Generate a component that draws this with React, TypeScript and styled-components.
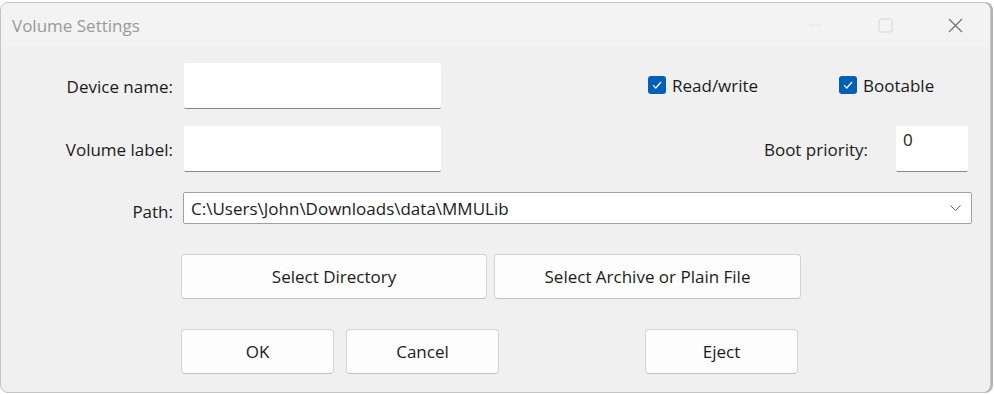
import React from 'react';
import styled, { createGlobalStyle } from 'styled-components';

const GlobalStyle = createGlobalStyle`
    html, body {
        margin: 0;
        padding: 0;
        background: #ffffff;
    }
    body {
        font-family: 'Open Sans', 'Noto Sans', 'Liberation Sans', sans-serif;
        font-size: 17px;
        color: #1b1b1b;
    }
`;

const Screen = styled.div`
    width: 994px;
    height: 394px;
    padding-top: 2px;
    box-sizing: border-box;
    overflow: hidden;
`;

const Window = styled.div`
    width: 991px;
    height: 391px;
    box-sizing: border-box;
    border: 1px solid #c4c4c4;
    border-radius: 8px;
    background: #f0f0f0;
    box-shadow: 2px 0 0 #b4b4b4;
    display: flex;
    flex-direction: column;
    overflow: hidden;
`;

const TitleBar = styled.div`
    height: 44px;
    flex: none;
    display: flex;
    align-items: center;
    padding-left: 11px;
    background: #f3f3f3;
`;

const Title = styled.div`
    flex: 1;
    color: #9a9a9a;
    font-size: 17px;
`;

const CaptionButton = styled.div`
    width: 70px;
    height: 44px;
    display: flex;
    align-items: center;
    justify-content: center;
`;

const Body = styled.div`
    flex: 1;
    display: flex;
    flex-direction: column;
    padding-top: 16px;
`;

const Row = styled.div<{ $gap: number }>`
    display: flex;
    align-items: center;
    margin-bottom: ${(p) => p.$gap}px;
`;

const Label = styled.label<{ $drop?: number }>`
    width: 172px;
    flex: none;
    text-align: right;
    white-space: nowrap;
    padding-top: ${(p) => p.$drop ?? 0}px;
`;

const TextBox = styled.div<{ $width: number; $offset?: number }>`
    width: ${(p) => p.$width}px;
    height: 46px;
    margin-left: ${(p) => p.$offset ?? 0}px;
    flex: none;
    box-sizing: border-box;
    background: #ffffff;
    border-bottom: 1px solid #868686;
    border-radius: 2px;
    padding: 2px 7px;
    line-height: 24px;
`;

const CheckGroup = styled.div`
    display: flex;
    margin-left: 207px;
    margin-top: -2px;
`;

const CheckItem = styled.label<{ $width: number }>`
    width: ${(p) => p.$width}px;
    display: flex;
    align-items: center;
    gap: 6px;
`;

const Box = styled.span`
    width: 18px;
    height: 18px;
    flex: none;
    border-radius: 3px;
    background: #005fb8;
    display: flex;
    align-items: center;
    justify-content: center;
`;

const PriorityGroup = styled.div`
    margin-left: auto;
    margin-right: 22px;
    display: flex;
    align-items: center;
    gap: 28px;
`;

const Combo = styled.div`
    flex: 1;
    margin-left: 10px;
    margin-right: 18px;
    height: 32px;
    box-sizing: border-box;
    border: 1px solid #a0a0a0;
    border-radius: 2px;
    background: #ffffff;
    display: flex;
    align-items: center;
    padding: 0 10px 0 7px;
`;

const ComboText = styled.span`
    flex: 1;
`;

const ButtonRow = styled.div<{ $gap: number }>`
    display: flex;
    padding-left: 180px;
    gap: 8px;
    margin-bottom: ${(p) => p.$gap}px;
`;

const Button = styled.button<{ $width: number; $push?: number }>`
    width: ${(p) => p.$width}px;
    height: 45px;
    margin-left: ${(p) => p.$push ?? 0}px;
    box-sizing: border-box;
    border: 1px solid #d3d3d3;
    border-bottom-color: #c2c2c2;
    border-radius: 4px;
    background: #fdfdfd;
    font: inherit;
    color: #1b1b1b;
    padding: 0;
`;

const Check = () => (
    <svg width="10" height="8" viewBox="0 0 10 8">
        <path d="M1 4.2 L3.8 7 L9 1" fill="none" stroke="#ffffff" strokeWidth="1.2" />
    </svg>
);

export default function App() {
    return (
        <Screen>
            <GlobalStyle />
            <Window>
                <TitleBar>
                    <Title>Volume Settings</Title>
                    <CaptionButton>
                        <svg width="12" height="2" viewBox="0 0 12 2">
                            <path d="M0 1 H12" stroke="#e4e4e4" />
                        </svg>
                    </CaptionButton>
                    <CaptionButton>
                        <svg width="15" height="15" viewBox="0 0 15 15">
                            <rect x="1" y="1" width="13" height="13" rx="2" fill="none" stroke="#d6d6d6" />
                        </svg>
                    </CaptionButton>
                    <CaptionButton>
                        <svg width="15" height="15" viewBox="0 0 15 15">
                            <path d="M1 1 L14 14 M14 1 L1 14" stroke="#707070" strokeWidth="1.1" />
                        </svg>
                    </CaptionButton>
                </TitleBar>
                <Body>
                    <Row $gap={17}>
                        <Label>Device name:</Label>
                        <TextBox $width={257} $offset={11} />
                        <CheckGroup>
                            <CheckItem $width={191}>
                                <Box>
                                    <Check />
                                </Box>
                                Read/write
                            </CheckItem>
                            <CheckItem $width={110}>
                                <Box>
                                    <Check />
                                </Box>
                                Bootable
                            </CheckItem>
                        </CheckGroup>
                    </Row>
                    <Row $gap={20}>
                        <Label>Volume label:</Label>
                        <TextBox $width={257} $offset={11} />
                        <PriorityGroup>
                            <span>Boot priority:</span>
                            <TextBox $width={72}>0</TextBox>
                        </PriorityGroup>
                    </Row>
                    <Row $gap={30}>
                        <Label $drop={6}>Path:</Label>
                        <Combo>
                            <ComboText>C:\Users\John\Downloads\data\MMULib</ComboText>
                            <svg width="11" height="6" viewBox="0 0 11 6">
                                <path d="M0.5 0.5 L5.5 5.5 L10.5 0.5" fill="none" stroke="#606060" strokeWidth="1" />
                            </svg>
                        </Combo>
                    </Row>
                    <ButtonRow $gap={30}>
                        <Button $width={306}>Select Directory</Button>
                        <Button $width={307} $push={-1}>Select Archive or Plain File</Button>
                    </ButtonRow>
                    <ButtonRow $gap={0}>
                        <Button $width={153}>OK</Button>
                        <Button $width={153} $push={4}>Cancel</Button>
                        <Button $width={153} $push={138}>Eject</Button>
                    </ButtonRow>
                </Body>
            </Window>
        </Screen>
    );
}
